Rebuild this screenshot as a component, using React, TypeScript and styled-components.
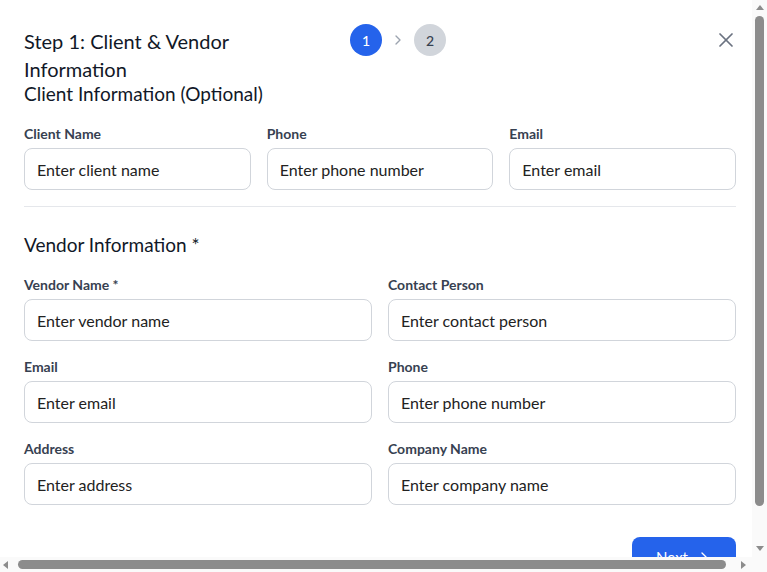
import React from 'react'
import styled, { createGlobalStyle } from 'styled-components'
import { X, ChevronRight } from 'lucide-react'

const GlobalStyle = createGlobalStyle`
  * {
    box-sizing: border-box;
  }
  body {
    margin: 0;
    background: #ffffff;
    font-family: Lato, 'Liberation Sans', sans-serif;
    color: #111827;
  }
`

type FieldProps = {
  label: string
  placeholder: string
}

const Field = ({ label, placeholder }: FieldProps) => {
  return (
    <FieldBox>
      <Label>{label}</Label>
      <Input placeholder={placeholder} />
    </FieldBox>
  )
}

const Stepper = () => {
  return (
    <StepRow>
      <StepDot active>1</StepDot>
      <ChevronRight size={16} color="#9ca3af" strokeWidth={2} />
      <StepDot>2</StepDot>
    </StepRow>
  )
}

export default function App() {
  return (
    <Frame>
      <GlobalStyle />
      <Content>
        <Panel>
          <Header>
            <TitleBox>
              <Title>Step 1: Client &amp; Vendor Information</Title>
            </TitleBox>
            <Stepper />
            <Spacer />
            <CloseButton aria-label="Close">
              <X size={24} strokeWidth={1.75} />
            </CloseButton>
          </Header>

          <SectionTitle>Client Information (Optional)</SectionTitle>
          <Grid cols={3}>
            <Field label="Client Name" placeholder="Enter client name" />
            <Field label="Phone" placeholder="Enter phone number" />
            <Field label="Email" placeholder="Enter email" />
          </Grid>

          <Divider />

          <SectionTitle spaced>Vendor Information *</SectionTitle>
          <Grid cols={2}>
            <Field label="Vendor Name *" placeholder="Enter vendor name" />
            <Field label="Contact Person" placeholder="Enter contact person" />
            <Field label="Email" placeholder="Enter email" />
            <Field label="Phone" placeholder="Enter phone number" />
            <Field label="Address" placeholder="Enter address" />
            <Field label="Company Name" placeholder="Enter company name" />
          </Grid>

          <Footer>
            <NextButton>
              Next
              <ChevronRight size={16} strokeWidth={2} />
            </NextButton>
          </Footer>
        </Panel>
      </Content>

      <VTrack>
        <Arrow dir="up" />
        <VThumb />
        <Spacer />
        <Arrow dir="down" />
      </VTrack>
      <HTrack>
        <Arrow dir="left" />
        <HThumb />
        <Spacer />
        <Arrow dir="right" />
      </HTrack>
      <Corner />
    </Frame>
  )
}

const Frame = styled.div`
  width: 767px;
  height: 572px;
  display: grid;
  grid-template-columns: 752px 15px;
  grid-template-rows: 557px 15px;
  overflow: hidden;
`

const Content = styled.div`
  overflow: hidden;
`

const VTrack = styled.div`
  display: flex;
  flex-direction: column;
  align-items: center;
  padding: 5px 0 6px;
  background: #fafafa;
`

const HTrack = styled.div`
  display: flex;
  align-items: center;
  padding: 0 6px 0 3px;
  background: #fafafa;
`

const Corner = styled.div`
  background: #fafafa;
`

const VThumb = styled.div`
  width: 9px;
  height: 490px;
  margin-top: 6px;
  border-radius: 5px;
  background: #8c8c8c;
`

const HThumb = styled.div`
  width: 708px;
  height: 9px;
  margin-left: 10px;
  border-radius: 5px;
  background: #8c8c8c;
`

const arrowBorders = {
  up: 'border-left: 4px solid transparent; border-right: 4px solid transparent; border-bottom: 5px solid #8c8c8c;',
  down: 'border-left: 4px solid transparent; border-right: 4px solid transparent; border-top: 5px solid #8c8c8c;',
  left: 'border-top: 4px solid transparent; border-bottom: 4px solid transparent; border-right: 5px solid #8c8c8c;',
  right: 'border-top: 4px solid transparent; border-bottom: 4px solid transparent; border-left: 5px solid #8c8c8c;',
}

const Arrow = styled.div<{ dir: 'up' | 'down' | 'left' | 'right' }>`
  width: 0;
  height: 0;
  flex: none;
  ${(p) => arrowBorders[p.dir]}
`

const Panel = styled.div`
  width: 760px;
  padding: 24px;
  background: #ffffff;
`

const Header = styled.div`
  display: flex;
  align-items: flex-start;
`

const TitleBox = styled.div`
  flex: 0 0 326px;
  padding-top: 3px;
`

const Title = styled.h2`
  margin: 0;
  width: 300px;
  font-size: 20px;
  line-height: 28px;
  font-weight: 400;
  color: #111827;
`

const StepRow = styled.div`
  display: flex;
  align-items: center;
  gap: 8px;
`

const StepDot = styled.div<{ active?: boolean }>`
  width: 32px;
  height: 32px;
  border-radius: 50%;
  display: flex;
  align-items: center;
  justify-content: center;
  font-size: 14px;
  font-weight: 500;
  background: ${(p) => (p.active ? '#2563eb' : '#d1d5db')};
  color: ${(p) => (p.active ? '#ffffff' : '#374151')};
`

const Spacer = styled.div`
  flex: 1;
`

const CloseButton = styled.button`
  border: none;
  background: none;
  padding: 0;
  margin-top: 4px;
  margin-right: -2px;
  width: 24px;
  height: 24px;
  display: flex;
  color: #6b7280;
  cursor: pointer;
`

const SectionTitle = styled.h3<{ spaced?: boolean }>`
  margin: ${(p) => (p.spaced ? '0 0 16px' : '0 0 19px')};
  font-size: 19px;
  line-height: ${(p) => (p.spaced ? '28px' : '22px')};
  font-weight: 400;
  color: #111827;
`

const Grid = styled.div<{ cols: number }>`
  display: grid;
  grid-template-columns: repeat(${(p) => p.cols}, 1fr);
  column-gap: 16px;
  row-gap: 16px;
`

const FieldBox = styled.div`
  display: flex;
  flex-direction: column;
`

const Label = styled.label`
  font-size: 14px;
  line-height: 20px;
  font-weight: 700;
  color: #374151;
  margin-bottom: 4px;
`

const Input = styled.input`
  height: 42px;
  width: 100%;
  border: 1px solid #d1d5db;
  border-radius: 8px;
  padding: 0 12px;
  font-family: inherit;
  font-size: 16px;
  color: #111827;
  background: #ffffff;
  outline: none;

  &::placeholder {
    color: #222222;
    opacity: 1;
  }
`

const Divider = styled.hr`
  border: none;
  border-top: 1px solid #e5e7eb;
  margin: 16px 0 24px;
`

const Footer = styled.div`
  display: flex;
  justify-content: flex-end;
  margin-top: 32px;
`

const NextButton = styled.button`
  display: flex;
  align-items: center;
  gap: 8px;
  height: 40px;
  padding: 0 24px;
  border: none;
  border-radius: 8px;
  background: #2563eb;
  color: #ffffff;
  font-family: inherit;
  font-size: 15px;
  cursor: pointer;
`
